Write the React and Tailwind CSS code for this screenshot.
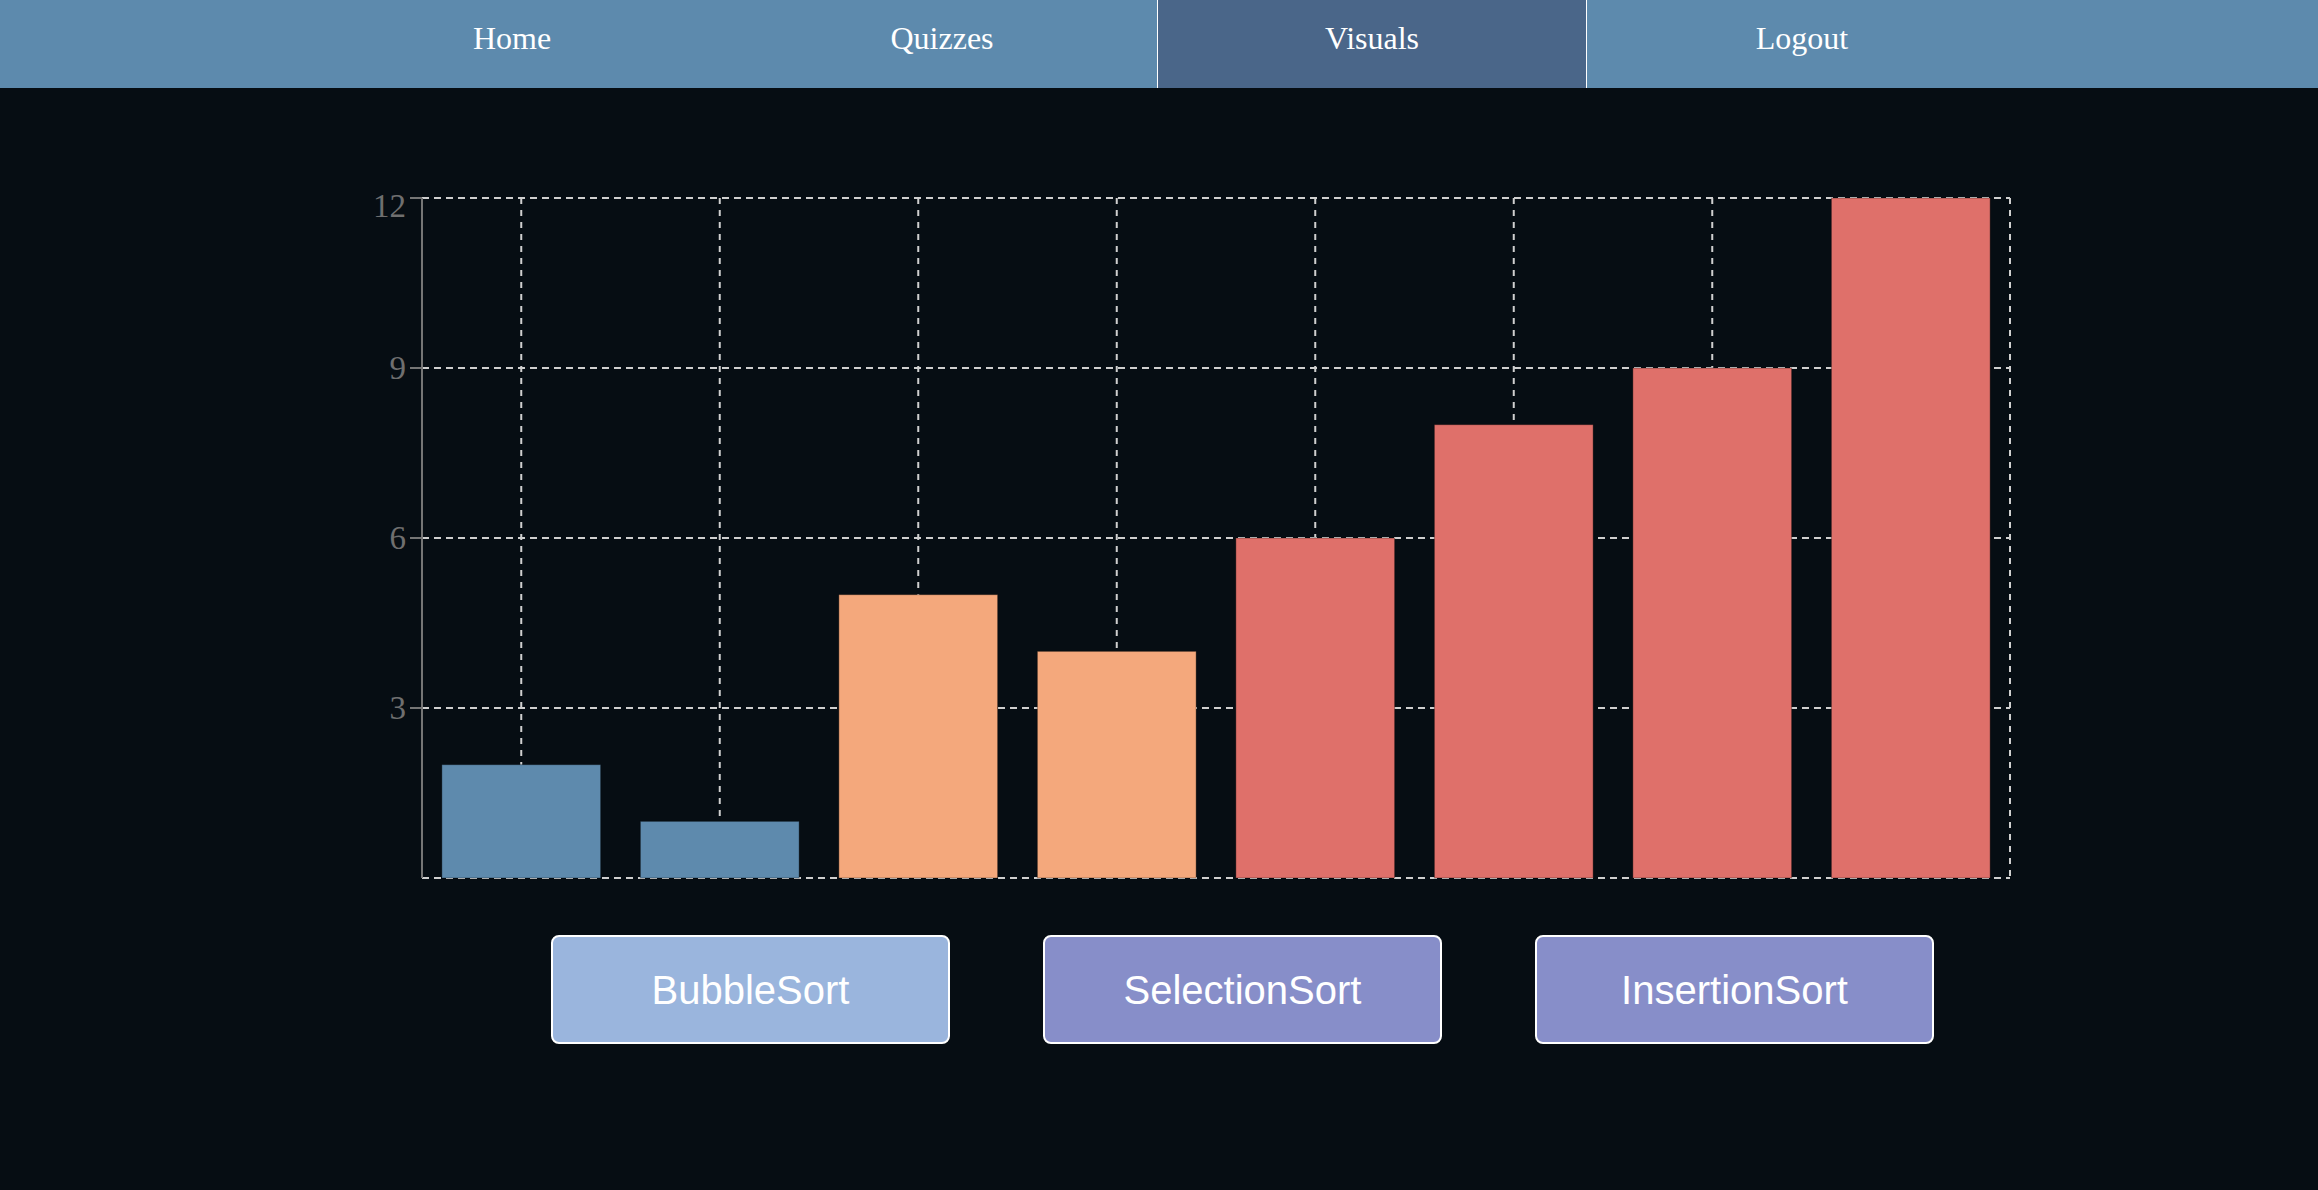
import React from "react";

const data = [
  { v: 2, c: "#5e8aad" },
  { v: 1, c: "#5e8aad" },
  { v: 5, c: "#f4a87c" },
  { v: 4, c: "#f4a87c" },
  { v: 6, c: "#df706a" },
  { v: 8, c: "#df706a" },
  { v: 9, c: "#df706a" },
  { v: 12, c: "#df706a" },
];

function Chart() {
  const left = 52;
  const right = 1640;
  const top = 28;
  const bottom = 708;
  const unit = (bottom - top) / 12;
  const band = (right - left) / 8;
  const grid = "#cfcfcf";
  return (
    <svg width="1660" height="720" className="block">
      {[12, 9, 6, 3, 0].map((t) => (
        <line
          key={"h" + t}
          x1={left}
          x2={right}
          y1={bottom - t * unit}
          y2={bottom - t * unit}
          stroke={grid}
          strokeWidth="2"
          strokeDasharray="7 5"
        />
      ))}
      {data.map((d, i) => (
        <line
          key={"v" + i}
          x1={left + band * i + band / 2}
          x2={left + band * i + band / 2}
          y1={top}
          y2={bottom}
          stroke={grid}
          strokeWidth="2"
          strokeDasharray="6 6"
        />
      ))}
      <line x1={right} x2={right} y1={top} y2={bottom} stroke={grid} strokeWidth="2" strokeDasharray="6 6" />
      {data.map((d, i) => (
        <rect
          key={"b" + i}
          x={left + band * i + band * 0.1}
          y={bottom - d.v * unit}
          width={band * 0.8}
          height={d.v * unit}
          fill={d.c}
          stroke="rgba(0,0,0,0.35)"
          strokeWidth="1"
        />
      ))}
      <line x1={left} x2={left} y1={top} y2={bottom} stroke="#757575" strokeWidth="2" />
      {[12, 9, 6, 3].map((t) => (
        <g key={"t" + t}>
          <line x1={left - 12} x2={left} y1={bottom - t * unit} y2={bottom - t * unit} stroke="#757575" strokeWidth="2" />
          <text
            x={36}
            y={t === 12 ? bottom - t * unit + 19 : bottom - t * unit + 11}
            textAnchor="end"
            fill="#6f6f6f"
            fontSize="33"
            fontFamily="'Liberation Serif', serif"
          >
            {t}
          </text>
        </g>
      ))}
    </svg>
  );
}

export default function App() {
  const items = ["Home", "Quizzes", "Visuals", "Logout"];
  return (
    <div className="min-h-screen w-full bg-[#060d13]">
      <nav className="h-[88px] w-full bg-[#5d8aad] pl-[297px] flex">
        {items.map((it) => (
          <div
            key={it}
            className={
              it === "Visuals"
                ? "w-[430px] h-[88px] bg-[#4a6689] border-x border-white text-center text-white text-[32px] leading-[48px] pt-[14px] font-['Liberation_Serif',serif]"
                : "w-[430px] h-[88px] text-center text-white text-[32px] leading-[48px] pt-[14px] font-['Liberation_Serif',serif]"
            }
          >
            {it}
          </div>
        ))}
      </nav>
      <div className="pt-[82px] pl-[370px]">
        <Chart />
      </div>
      <div className="mt-[45px] pl-[551px] flex gap-[93px]">
        <button className="w-[399px] h-[109px] rounded-[8px] border-2 border-white bg-[#9ab5dd] text-white text-[40px] font-['Liberation_Sans',Arial,sans-serif]">
          BubbleSort
        </button>
        <button className="w-[399px] h-[109px] rounded-[8px] border-2 border-white bg-[#878ec9] text-white text-[40px] font-['Liberation_Sans',Arial,sans-serif]">
          SelectionSort
        </button>
        <button className="w-[399px] h-[109px] rounded-[8px] border-2 border-white bg-[#878ec9] text-white text-[40px] font-['Liberation_Sans',Arial,sans-serif]">
          InsertionSort
        </button>
      </div>
    </div>
  );
}
